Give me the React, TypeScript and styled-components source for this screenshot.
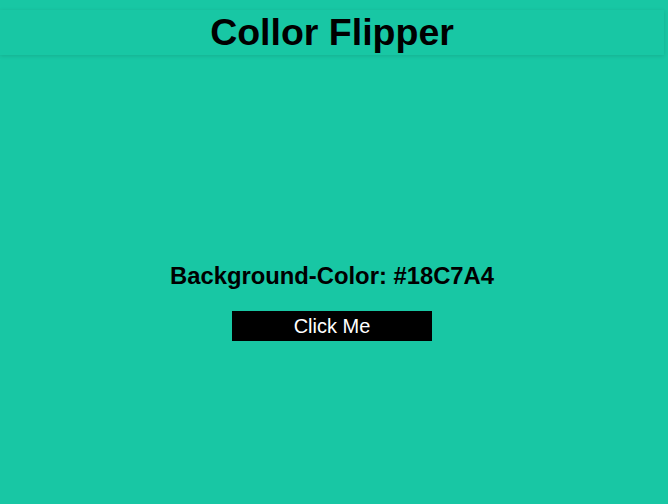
import React, { useState } from 'react'
import styled, { createGlobalStyle } from 'styled-components'

const GlobalStyle = createGlobalStyle<{ bg: string }>`
  html, body {
    margin: 0;
    padding: 0;
    height: 100%;
  }
  body {
    background: ${p => p.bg};
    font-family: "Liberation Sans", Arial, sans-serif;
    color: #000;
  }
`

const Page = styled.div`
  width: 664px;
  height: 504px;
  display: flex;
  flex-direction: column;
`

const Header = styled.header`
  margin-top: 10px;
  height: 45px;
  display: flex;
  align-items: center;
  justify-content: center;
  box-shadow: 0 1px 4px rgba(0, 0, 0, 0.12);
`

const Title = styled.h1`
  margin: 0;
  font-size: 37.5px;
  font-weight: bold;
  line-height: 1;
`

const Main = styled.main`
  flex: 1;
  display: flex;
  flex-direction: column;
  align-items: center;
  padding-top: 208px;
`

const Label = styled.h2`
  margin: 0;
  font-size: 23.8px;
  font-weight: bold;
  line-height: 26px;
`

const Button = styled.button`
  margin-top: 22px;
  width: 200px;
  height: 30px;
  border: none;
  background: #000;
  color: #fff;
  font-family: "Liberation Sans", Arial, sans-serif;
  font-size: 20px;
  cursor: pointer;
`

const randomHex = () =>
  '#' + Math.floor(Math.random() * 0xffffff).toString(16).padStart(6, '0').toUpperCase()

const App = () => {
  const [color, setColor] = useState('#18C7A4')

  return (
    <>
      <GlobalStyle bg={color} />
      <Page>
        <Header>
          <Title>Collor Flipper</Title>
        </Header>
        <Main>
          <Label>Background-Color: {color}</Label>
          <Button onClick={() => setColor(randomHex())}>Click Me</Button>
        </Main>
      </Page>
    </>
  )
}

export default App
